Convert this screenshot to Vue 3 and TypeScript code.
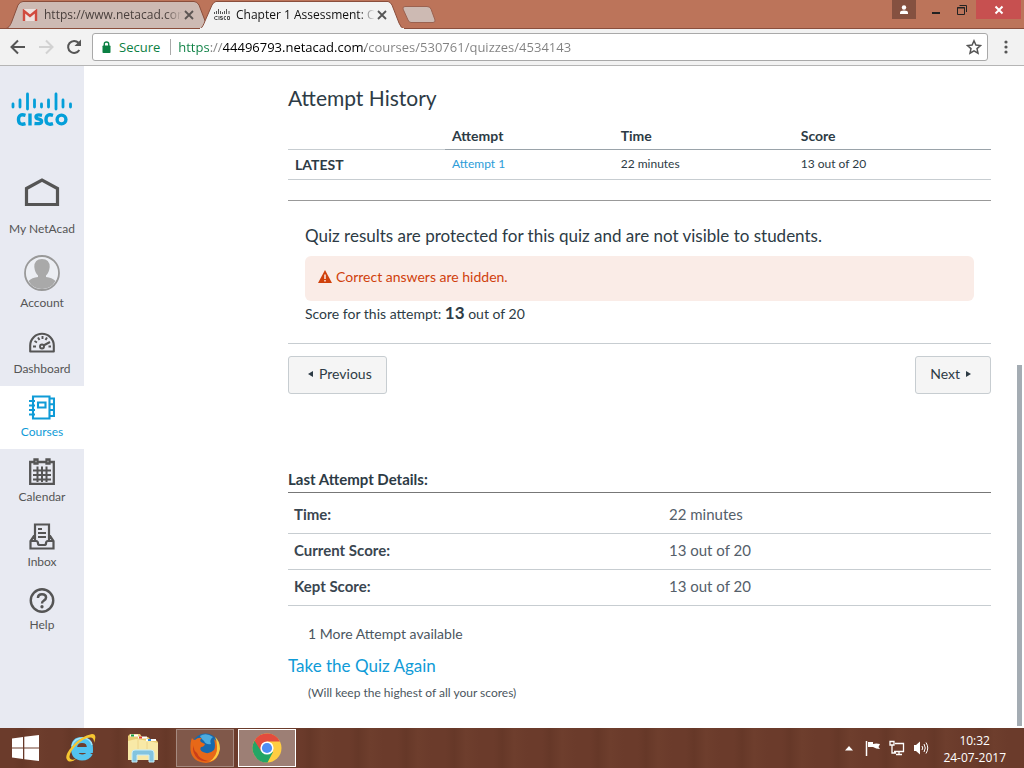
<script setup lang="ts">
import { ref } from 'vue'

interface NavItem {
  id: string
  label: string
}

const navItems: NavItem[] = [
  { id: 'home', label: 'My NetAcad' },
  { id: 'account', label: 'Account' },
  { id: 'dashboard', label: 'Dashboard' },
  { id: 'courses', label: 'Courses' },
  { id: 'calendar', label: 'Calendar' },
  { id: 'inbox', label: 'Inbox' },
  { id: 'help', label: 'Help' },
]
const activeNav = ref('courses')
const address = ref('https://44496793.netacad.com/courses/530761/quizzes/4534143')
const details = [
  { label: 'Time:', value: '22 minutes' },
  { label: 'Current Score:', value: '13 out of 20' },
  { label: 'Kept Score:', value: '13 out of 20' },
]
</script>

<template>
  <div class="screen">
    <header class="titlebar">
      <div class="tabs">
        <div class="tab back">
          <svg class="tab-shape" viewBox="0 0 202 29" preserveAspectRatio="none" aria-hidden="true">
            <path d="M0 28.5 C3 28 5 24 6 21 L12 5 Q14 1.500 17 1.500 H188 Q191 1.500 193 5 L202 28.500Z" fill="#cdbab3" stroke="#8a4e3c" />
          </svg>
          <svg class="fav" viewBox="0 0 16 12" aria-hidden="true">
            <path d="M1 0H15V12H1Z" fill="#eee2df" />
            <path d="M2 12V2L8 7L14 2V12" fill="none" stroke="#d14b3f" stroke-width="2.400" />
          </svg>
          <button class="tab-title" type="button">https://www.netacad.com</button>
          <button class="tab-close" type="button" aria-label="Close tab">
            <svg viewBox="0 0 10 10"><path d="M1 1L9 9M9 1L1 9" stroke="#5c5553" stroke-width="1.800" /></svg>
          </button>
        </div>
        <div class="tab front">
          <svg class="tab-shape" viewBox="0 0 204 29" preserveAspectRatio="none" aria-hidden="true">
            <path d="M0 29 C2 28 4 24 5 21 L12 5 Q14 1.500 16 1.500 H188 Q190 1.500 192 5 L199 23 Q201 28 204 29Z" fill="#f2f2f2" stroke="#8a4e3c" />
            <path d="M0 29H204" stroke="#f2f2f2" stroke-width="2" />
          </svg>
          <svg class="fav" viewBox="0 0 16 12" aria-hidden="true">
            <path d="M.5 3V5M2.500 2V5M4.500 0V5M6.500 2V5M8.500 3V5M10.500 2V5M12.500 0V5M15 2V5" stroke="#555" />
            <path d="M3.500 7.500H1.500Q.5 7.500 .5 9T1.500 10.500H3.500M5 7V11M8.500 7.500H6.500V9H8.500V10.500H6.300M12 7.500H10.500Q9.800 9 10.500 10.500H12M13.500 7.500H15.500V10.500H13.500Z" fill="none" stroke="#555" />
          </svg>
          <button class="tab-title" type="button">Chapter 1 Assessment: Ch</button>
          <button class="tab-close" type="button" aria-label="Close tab">
            <svg viewBox="0 0 10 10"><path d="M1 1L9 9M9 1L1 9" stroke="#555" stroke-width="1.800" /></svg>
          </button>
        </div>
        <button class="new-tab" type="button" aria-label="New tab">
          <svg viewBox="0 0 34 17"><path d="M3 .5H25Q28 .5 29 3L33 14Q33.500 16.500 31 16.500H9Q7 16.500 6 14L1 3Q.5 .5 3 .5Z" fill="#cdbab3" stroke="#9b6250" /></svg>
        </button>
      </div>
      <div class="window-buttons">
        <button class="win user" type="button" aria-label="Profile">
          <svg viewBox="0 0 10 10"><circle cx="5" cy="2.500" r="2.200" fill="#fff" /><path d="M1 9V7.500Q1 5.500 5 5.500T9 7.500V9Z" fill="#fff" /></svg>
        </button>
        <button class="win min" type="button" aria-label="Minimize">
          <svg viewBox="0 0 10 10"><path d="M1 8H9" stroke="#222" stroke-width="2" /></svg>
        </button>
        <button class="win max" type="button" aria-label="Restore">
          <svg viewBox="0 0 10 10"><path d="M.5 2.500H7.500V9.500H.5ZM2.500 .5H9.500V7" fill="none" stroke="#222" /><path d="M0 3H8" stroke="#222" /></svg>
        </button>
        <button class="win close" type="button" aria-label="Close">
          <svg viewBox="0 0 10 10"><path d="M1.500 1.500L8.500 8.500M8.500 1.500L1.500 8.500" stroke="#fff" stroke-width="2" /></svg>
        </button>
      </div>
    </header>

    <div class="toolbar">
      <button class="tool" type="button" aria-label="Back">
        <svg viewBox="0 0 16 16"><path d="M15 8H2M8 1.500L1.500 8L8 14.500" fill="none" stroke="#555" stroke-width="2" /></svg>
      </button>
      <button class="tool" type="button" aria-label="Forward">
        <svg viewBox="0 0 16 16"><path d="M1 8H14M8 1.500L14.500 8L8 14.500" fill="none" stroke="#d2d2d2" stroke-width="2" /></svg>
      </button>
      <button class="tool" type="button" aria-label="Reload">
        <svg viewBox="0 0 16 16"><path d="M13.300 11A6 6 0 1 1 12.500 3.800" fill="none" stroke="#555" stroke-width="2" /><path d="M15 .5V7H8.500Z" fill="#555" /></svg>
      </button>
      <div class="omnibox">
        <svg class="lock" viewBox="0 0 9 12" aria-hidden="true"><rect x=".5" y="4.500" width="8" height="7.500" rx=".8" fill="#0b8043" /><path d="M2.300 5V3Q2.300 1 4.500 1T6.700 3V5" fill="none" stroke="#0b8043" stroke-width="1.400" /></svg>
        <label class="secure" for="address">Secure</label>
        <input id="address" v-model="address" class="address" type="text" spellcheck="false">
        <button class="star" type="button" aria-label="Bookmark">
          <svg viewBox="0 0 16 16"><path d="M8 1.800L9.900 6.100L14.500 6.500L11 9.600L12 14.200L8 11.800L4 14.200L5 9.600L1.500 6.500L6.100 6.100Z" fill="none" stroke="#555" stroke-width="1.500" /></svg>
        </button>
      </div>
      <button class="menu" type="button" aria-label="Menu">
        <svg viewBox="0 0 4 14"><circle cx="2" cy="2" r="1.600" fill="#555" /><circle cx="2" cy="7" r="1.600" fill="#555" /><circle cx="2" cy="12" r="1.600" fill="#555" /></svg>
      </button>
    </div>

    <div class="page">
      <nav class="sidebar">
        <a class="logo" href="#" aria-label="Cisco">
          <svg viewBox="0 0 62 36">
            <path d="M2 12V15M9 8V15M16.500 2V17M23.500 8V15M30.500 12V15M37.500 8V15M45 2V17M52 8V15M59.500 12V15" stroke="#049fd9" stroke-width="2.800" stroke-linecap="round" />
            <g fill="none" stroke="#049fd9" stroke-width="3.400">
              <path d="M14.500 23.300Q7.500 21.300 7.500 27.500T14.500 31.700" />
              <path d="M19 21.500V33.500" />
              <path d="M31 23.300Q25 22 25 25Q25 26.500 28 27.200Q31 28 30.500 30Q30 32.200 23.500 31.500" />
              <path d="M42 23.300Q35 21.300 35 27.500T42 31.700" />
              <circle cx="50.500" cy="27.500" r="4.400" />
            </g>
          </svg>
        </a>
        <a
          v-for="item in navItems"
          :key="item.id"
          href="#"
          :class="['nav-item', item.id, { active: activeNav === item.id }]"
          @click.prevent="activeNav = item.id"
        >
          <svg v-if="item.id === 'home'" class="nav-icon" viewBox="0 0 36 30" aria-hidden="true"><path d="M2.500 10.500L18 2L33.500 10.500V26.500H2.500Z" fill="none" stroke="currentColor" stroke-width="3.200" /></svg>
          <svg v-else-if="item.id === 'account'" class="nav-icon" viewBox="0 0 36 36" aria-hidden="true">
            <circle cx="18" cy="18" r="17" fill="#eceef3" stroke="#999" stroke-width="1.800" />
            <path d="M10.300 12Q10.300 4 18 4T25.700 12Q25 18 22 20.500V22Q28 22.500 31.500 26Q27 34 18 34T4.500 26Q8 22.500 14 22V20.500Q11 18 10.300 12Z" fill="#a9a9a9" />
          </svg>
          <svg v-else-if="item.id === 'dashboard'" class="nav-icon" viewBox="0 0 26 22" aria-hidden="true">
            <path d="M1.200 20V14A11.800 11.800 0 0 1 24.800 14V20Z" fill="none" stroke="currentColor" stroke-width="2.100" stroke-linejoin="round" />
            <path d="M4 15H7M5.500 9.500L8 11M9 6L10.500 8.500M13.500 4.500V7.500M18 6L16.500 8.500M19.500 15H22" stroke="currentColor" stroke-width="1.900" />
            <circle cx="13" cy="15" r="2" fill="none" stroke="currentColor" stroke-width="1.900" /><path d="M14.500 14L21 10.500" stroke="currentColor" stroke-width="2" />
          </svg>
          <svg v-else-if="item.id === 'courses'" class="nav-icon" viewBox="0 0 26 25" aria-hidden="true">
            <path d="M4 1.500H20.500V23.500H4ZM20.500 3.500H25V21H20.500M21 9.300H25M21 15H25M9 7.500H16.500V12.500H9Z" fill="none" stroke="currentColor" stroke-width="2.100" />
            <path d="M0 6H6M0 10.500H6M0 15H6M0 19.500H6" stroke="currentColor" stroke-width="1.900" />
          </svg>
          <svg v-else-if="item.id === 'calendar'" class="nav-icon" viewBox="0 0 26 27" aria-hidden="true">
            <path d="M5 4H1.200V25.800H24.800V4H21M9 4H17M5.500 1.500H8.500V5.500H5.500ZM17.500 1.500H20.500V5.500H17.500Z" fill="none" stroke="currentColor" stroke-width="2.300" />
            <path d="M4 12.500H22M4 17H22M4 21.500H22M8.500 8.500V24M13 8.500V24M17.500 8.500V24" stroke="currentColor" stroke-width="2" />
          </svg>
          <svg v-else-if="item.id === 'inbox'" class="nav-icon" viewBox="0 0 26 27" aria-hidden="true">
            <path d="M6 17V1.500H20V17M6 11.500L1.500 18V25.500H24.500V18L20 11.500M1.500 18H7Q9 18 9 20.500Q9 22 11 22H15Q17 22 17 20.500Q17 18 19 18H24.500" fill="none" stroke="currentColor" stroke-width="2.200" />
            <path d="M9 6H13M9 10H17M9 14H17" stroke="currentColor" stroke-width="2" />
          </svg>
          <svg v-else class="nav-icon" viewBox="0 0 26 26" aria-hidden="true">
            <circle cx="13" cy="13" r="11.700" fill="none" stroke="currentColor" stroke-width="2.500" />
            <path d="M8.800 10.500Q8.800 6.500 13 6.500T17.200 10Q17.200 12 15 13Q13 14 13 16" fill="none" stroke="currentColor" stroke-width="2.600" /><circle cx="13" cy="19.500" r="1.700" fill="currentColor" />
          </svg>
          <span class="nav-label">{{ item.label }}</span>
        </a>
      </nav>

      <main class="content">
        <h2 class="heading">Attempt History</h2>
        <table class="history">
          <thead>
            <tr><td class="blank"></td><th scope="col">Attempt</th><th scope="col">Time</th><th scope="col">Score</th></tr>
          </thead>
          <tbody>
            <tr><th scope="row">LATEST</th><td><a href="#">Attempt 1</a></td><td>22 minutes</td><td>13 out of 20</td></tr>
          </tbody>
        </table>

        <section class="results">
          <h3 class="notice">Quiz results are protected for this quiz and are not visible to students.</h3>
          <div class="alert" role="alert">
            <svg viewBox="0 0 14 13" aria-hidden="true"><path d="M7 0L14 13H0Z" fill="#d0410c" /><path d="M7 4.500V9M7 10V11.500" stroke="#faece7" stroke-width="1.500" /></svg>
            Correct answers are hidden.
          </div>
          <p class="score">Score for this attempt: <strong>13</strong> out of 20</p>
        </section>

        <div class="pager">
          <button class="btn" type="button"><svg viewBox="0 0 5 6" aria-hidden="true"><path d="M5 0V6L0 3Z" fill="#2d3b45" /></svg>Previous</button>
          <button class="btn next" type="button">Next<svg viewBox="0 0 5 6" aria-hidden="true"><path d="M0 0V6L5 3Z" fill="#2d3b45" /></svg></button>
        </div>

        <h4 class="details-title">Last Attempt Details:</h4>
        <table class="details">
          <tbody>
            <tr v-for="row in details" :key="row.label"><th scope="row">{{ row.label }}</th><td>{{ row.value }}</td></tr>
          </tbody>
        </table>
        <p class="more">1 More Attempt available</p>
        <a class="retake" href="#">Take the Quiz Again</a>
        <p class="keep">(Will keep the highest of all your scores)</p>
        <div class="scroll-thumb"></div>
      </main>
    </div>

    <footer class="taskbar">
      <button class="start" type="button" aria-label="Start">
        <svg viewBox="0 0 27 26"><path d="M0 3.500L11 2V12.400H0ZM12.300 1.800L27 0V12.400H12.300ZM0 13.600H11V24L0 22.500ZM12.300 13.600H27V26L12.300 24.200Z" fill="#fff" /></svg>
      </button>
      <button class="app" type="button" aria-label="Internet Explorer">
        <svg viewBox="0 0 32 32">
          <path d="M25 21Q22.500 25.500 17 25.500Q9 25 9 16.500T17 8Q25.500 8 25 18H12" fill="none" stroke="#52c3ef" stroke-width="6" />
          <path d="M27 13Q25.500 6.500 18 6Q9 6 7 14" fill="none" stroke="#a6e5fa" stroke-width="1.300" />
          <path d="M3 29Q-2 25 7 14.500T27 2Q32.500 2 29 11Q29.500 3.500 22 6Q13 9.500 6.500 19Q3 25 5.500 27Q8 29 12 26Q7 31 3 29Z" fill="#f6c631" />
        </svg>
      </button>
      <button class="app" type="button" aria-label="File Explorer">
        <svg viewBox="0 0 32 30">
          <path d="M1 27V3L3 1H13L15 4H21L23 6H28L31 9V27Z" fill="#e9cd73" />
          <path d="M1 27V8L9 6L22 8L31 10V27Z" fill="#f8e9a7" />
          <path d="M3 2.500H11M11 4.500H20M19 7H29" stroke="#fff" stroke-width="2" /><path d="M4 2.500H7" stroke="#16a34a" stroke-width="2" /><path d="M12 4.500H15" stroke="#df3c2f" stroke-width="2" /><path d="M21 7H24" stroke="#2c8be0" stroke-width="2" />
          <path d="M11 7V16M20 9V16" stroke="#ecd48a" />
          <path d="M5 29V20Q5 17 8 17H24Q27 17 27 20V29H22V22H10V29Z" fill="#83c4df" stroke="#c9edf7" />
        </svg>
      </button>
      <button class="app open" type="button" aria-label="Firefox">
        <svg viewBox="0 0 32 32">
          <circle cx="16.500" cy="15" r="13.500" fill="#1769ad" /><path d="M11 4Q17 0 24 5Q20 8 22 12Q17 13 15 9Q13 8 11 4Z" fill="#4dacdf" />
          <path d="M3 6Q4 8 6 8Q9 5 13 6Q10 8 12 10L16 12Q15 15 12 15Q10 18 14 20Q20 23 25 18Q27 14 25 7Q31 11 30.500 18Q29 30 17 31Q3 30 1.500 18Q1 10 3 6Z" fill="#e76818" />
          <path d="M26 5Q31 9 31 17Q29 28 20 30Q29 24 28 14Q28 9 26 5Z" fill="#f9ca43" />
          <path d="M5 13Q2 20 9 27Q14 30 19 29Q10 27 8 21Q4 18 5 13Z" fill="#c93e19" />
        </svg>
      </button>
      <button class="app open current" type="button" aria-label="Chrome">
        <svg viewBox="0 0 32 32">
          <circle cx="16" cy="16" r="14.500" fill="#ffcd42" />
          <path d="M16 16L3.500 8.700A14.500 14.500 0 0 0 16.500 30.500L22 20Z" fill="#23a566" />
          <path d="M16 16L10 19L3.500 8.700A14.500 14.500 0 0 1 29 9.500H16Z" fill="#e34c3e" />
          <circle cx="16" cy="16" r="6.600" fill="#fff" /><circle cx="16" cy="16" r="5.100" fill="#4e8df5" />
        </svg>
      </button>
      <div class="tray">
        <svg class="tray-icon caret" viewBox="0 0 8 5" aria-hidden="true"><path d="M4 0L8 4.500H0Z" fill="#fff" /></svg>
        <svg class="tray-icon" viewBox="0 0 16 16" aria-hidden="true"><path d="M1.500 1V16" stroke="#fff" stroke-width="1.500" /><path d="M3 2H8V4Q11 3 15 4L13.500 7L15 9Q11 9 8 7H3Z" fill="#fff" /></svg>
        <svg class="tray-icon" viewBox="0 0 16 16" aria-hidden="true"><path d="M6 3.500H14.500V11.500H5M10 12V14.500M7 14.500H13M1 1.500H5V5H1ZM3 5V13H7" fill="none" stroke="#fff" stroke-width="1.300" /></svg>
        <svg class="tray-icon" viewBox="0 0 16 16" aria-hidden="true"><path d="M1 5H3L7 1.500V14.500L3 11H1Z" fill="#fff" /><path d="M9 6Q10.500 8 9 10M11 4Q13.500 8 11 12M13 2.500Q16.500 8 13 13.500" fill="none" stroke="#fff" /></svg>
        <time class="clock" datetime="2017-07-24T10:32"><span>10:32</span><span>24-07-2017</span></time>
      </div>
    </footer>
  </div>
</template>

<style>
body { margin: 0; }
</style>

<style scoped>
* { box-sizing: border-box; }
svg { display: block; flex: none; }
button { padding: 0; border: 0; background: none; font: inherit; color: inherit; }
a { text-decoration: none; }
h2, h3, h4, p { margin: 0; font-weight: 400; }
.screen { display: flex; flex-direction: column; min-height: 100vh; background: #fff; color: #2d3b45; font-family: Lato, "Open Sans", sans-serif; }

.titlebar { display: flex; justify-content: space-between; height: 29px; background: #bc745a; border-bottom: 1px solid #8a4e3c; font: 12px/16px "Open Sans", "Noto Sans", sans-serif; color: #222; }
.tabs { display: flex; height: 29px; padding-left: 6px; }
.tab { position: relative; display: flex; align-items: center; width: 202px; padding: 0 14px 0 16px; }
.tab.front { z-index: 1; width: 204px; margin-left: -8px; padding-right: 17px; padding-left: 14px; color: #111; }
.tab-shape { position: absolute; inset: 0; width: 100%; height: 29px; }
.fav, .tab-title, .tab-close { position: relative; }
.fav { width: 16px; height: 12px; }
.tab-title { flex: 1; min-width: 0; margin-left: 6px; overflow: hidden; white-space: nowrap; text-align: left; mask-image: linear-gradient(90deg, #000 88%, transparent); }
.back .tab-title { color: #4a403d; }
.tab-close { width: 10px; height: 10px; margin-left: 2px; }
.new-tab { width: 34px; margin-left: -2px; }
.window-buttons { display: flex; align-items: flex-start; }
.win { display: flex; justify-content: center; align-items: center; height: 19px; }
.win svg { width: 10px; height: 10px; }
.user { width: 24px; background: #855140; }
.min { width: 40px; }
.max { width: 20px; padding-right: 8px; }
.close { width: 45px; margin-right: 3px; background: #c75050; }

.toolbar { display: flex; align-items: center; height: 37px; padding: 0 8px 0 10px; border-bottom: 1px solid #b5b5b5; background: #f2f2f2; font: 13px/18px "Open Sans", "Noto Sans", sans-serif; }
.tool { width: 16px; height: 16px; margin-right: 12px; }
.tool:nth-child(3) { margin-right: 10px; }
.omnibox { display: flex; flex: 1; align-items: center; height: 28px; padding: 0 5px 0 9px; border: 1px solid #a9a9a9; border-radius: 3px; background: #fff; }
.lock { width: 9px; height: 12px; }
.secure { margin-left: 8px; padding-right: 10px; border-right: 1px solid #aaa; line-height: 16px; color: #0b8043; }
.address { flex: 1; min-width: 0; height: 24px; padding: 0 0 0 7px; border: 0; outline: 0; font: inherit; color: transparent; background: linear-gradient(90deg, #0b8043 0 39px, #808080 39px 52px, #000 52px 194px, #808080 194px); background-clip: text; -webkit-background-clip: text; }
.star, .star svg { width: 16px; height: 16px; }
.menu { width: 4px; height: 14px; margin-left: 16px; margin-right: 8px; }

.page { display: flex; flex: 1; }
.sidebar { flex: none; width: 84px; background: #e8eaf2; }
.logo { display: block; height: 103px; padding: 26px 11px 0; }
.nav-item { display: flex; flex-direction: column; align-items: center; padding: 9px 0; color: #555; font-size: 12px; line-height: 16px; }
.nav-icon { width: 26px; height: 26px; }
.nav-label { margin-top: 4px; }
.home .nav-icon { width: 36px; height: 30px; margin-bottom: 9px; }
.account { padding-bottom: 8px; }
.account .nav-icon { width: 36px; height: 36px; }
.dashboard .nav-icon { height: 29px; }
.courses .nav-icon, .help .nav-icon { height: 25px; }
.calendar .nav-icon, .inbox .nav-icon { height: 27px; }
.active { background: #fff; color: #0f9bd7; }

.content { position: relative; flex: 1; padding: 19px 33px 16px 204px; }
.heading { font-size: 21px; line-height: 26px; }
table { width: 100%; border-collapse: separate; border-spacing: 0; table-layout: fixed; text-align: left; }
.history { margin-top: 11px; font-size: 12px; }
.history td, .history th { height: 30px; padding: 0 7px; border-bottom: 1px solid #c7cdd1; line-height: 16px; }
.history tbody td { padding-bottom: 2px; }
.history thead th { height: 28px; border-bottom-color: #9aa3aa; font-size: 14px; }
.history .blank { width: 157px; height: 28px; }
.history thead th:nth-child(2) { width: 24%; }
.history thead th:nth-child(3) { width: 180px; }
.history tbody th { font-size: 14px; }
.history a { color: #2b9cd8; }
.results { margin-top: 20px; padding: 23px 17px 18px; border-top: 1px solid #999; border-bottom: 1px solid #c7cdd1; }
.notice { font-size: 17px; line-height: 24px; }
.alert { display: flex; align-items: flex-start; gap: 4px; min-height: 45px; margin-top: 8px; padding: 11px 13px; border-radius: 6px; background: #faece7; color: #d0410c; font-size: 14px; line-height: 20px; }
.alert svg { width: 14px; height: 13px; margin-top: 3px; }
.score { margin-top: 1px; font-size: 14px; line-height: 22px; }
.score strong { font-size: 17px; }
.pager { display: flex; justify-content: space-between; margin-top: 12px; }
.btn { display: flex; justify-content: center; align-items: center; gap: 6px; height: 38px; padding: 0 14px 2px 19px; border: 1px solid #c7cdd1; border-radius: 3px; background: #f5f5f5; font-size: 14px; line-height: 20px; }
.btn.next { padding-right: 19px; padding-left: 14px; }
.btn svg { width: 5px; height: 6px; }
.details-title { margin-top: 74px; padding-bottom: 2px; border-bottom: 1px solid #777; font-size: 15px; font-weight: 700; line-height: 22px; }
.details { margin-top: 5px; color: #55606a; font-size: 15px; }
.details th, .details td { height: 36px; padding: 0 6px 4px; border-bottom: 1px solid #c7cdd1; line-height: 20px; }
.details th { width: 375px; color: #3a4650; }
.more { margin: 17px 20px 0; color: #4b5660; font-size: 14px; line-height: 22px; }
.retake { display: inline-block; margin-top: 9px; color: #0f9bd7; font-size: 17px; line-height: 24px; }
.keep { margin: 6px 20px 0; color: #4b5660; font-size: 12px; line-height: 18px; }
.scroll-thumb { position: absolute; top: 299px; right: 2px; bottom: 2px; width: 5px; background: #a4acb3; }

.taskbar { display: flex; height: 40px; background: repeating-linear-gradient(90deg, #6b3b2b 0 14px, #663828 22px, #6e3e2d 34px, #6b3b2b 48px); color: #fff; font: 12px/16px "Open Sans", "Noto Sans", sans-serif; }
.start { display: flex; align-items: center; width: 50px; padding-left: 12px; }
.start svg { width: 27px; height: 26px; }
.app { display: flex; justify-content: center; align-items: center; width: 58px; height: 38px; margin: 1px 2px; }
.app svg { width: 32px; height: 32px; }
.open { border: 1px solid #a68a80; background: #80584a; }
.current { border-color: #fff; background: #9d7f75; }
.tray { display: flex; align-items: center; gap: 8px; margin-left: auto; padding-right: 18px; }
.tray-icon { width: 16px; height: 16px; }
.caret { width: 8px; height: 5px; margin-right: 4px; }
.clock { display: flex; flex-direction: column; align-items: center; padding-top: 2px; margin-left: 6px; line-height: 17px; }
</style>
